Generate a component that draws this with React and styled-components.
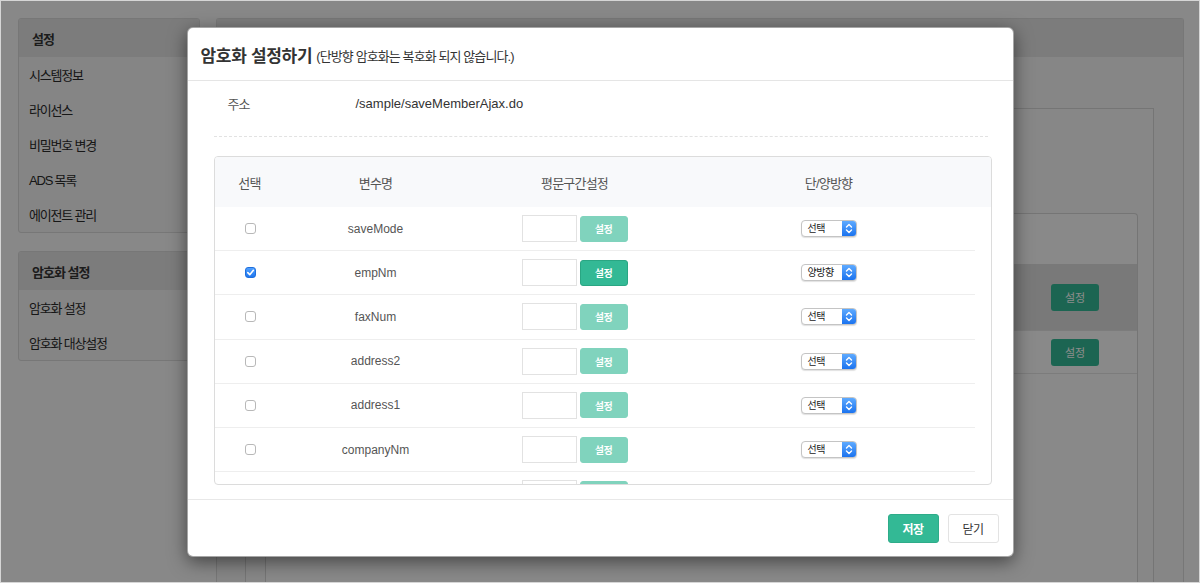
import styled, { createGlobalStyle } from 'styled-components';

const GlobalStyle = createGlobalStyle`
  html, body {
    margin: 0;
    padding: 0;
  }
  body {
    font-family: "Liberation Sans", "Noto Sans CJK KR", sans-serif;
    color: #333;
  }
  * {
    box-sizing: border-box;
  }
`;

const menuGroups = [
  { title: '설정', items: ['시스템정보', '라이선스', '비밀번호 변경', 'ADS 목록', '에이전트 관리'] },
  { title: '암호화 설정', items: ['암호화 설정', '암호화 대상설정'] },
];

const fields = [
  { name: 'saveMode', checked: false, direction: '선택' },
  { name: 'empNm', checked: true, direction: '양방향' },
  { name: 'faxNum', checked: false, direction: '선택' },
  { name: 'address2', checked: false, direction: '선택' },
  { name: 'address1', checked: false, direction: '선택' },
  { name: 'companyNm', checked: false, direction: '선택' },
  // last row is scrolled past the bottom edge, only the input tops show
  { name: '', checked: false, direction: null },
];

function CheckBox({ checked }) {
  return (
    <Check $checked={checked}>
      {checked && (
        <svg width="9" height="9" viewBox="0 0 10 10">
          <path d="M2 5.2 L4.2 7.4 L8.2 2.6" fill="none" stroke="#fff" strokeWidth="1.8" strokeLinecap="round" strokeLinejoin="round" />
        </svg>
      )}
    </Check>
  );
}

function MacSelect({ value }) {
  return (
    <SelectBox>
      <SelectValue>{value}</SelectValue>
      <SelectArrows>
        <svg width="8" height="11" viewBox="0 0 8 11">
          <path d="M1.5 4 L4 1.6 L6.5 4 M1.5 7 L4 9.4 L6.5 7" fill="none" stroke="#fff" strokeWidth="1.4" strokeLinecap="round" strokeLinejoin="round" />
        </svg>
      </SelectArrows>
    </SelectBox>
  );
}

function App() {
  return (
    <>
      <GlobalStyle />
      <Frame>
        <Sidebar>
          {menuGroups.map((group) => (
            <Panel key={group.title}>
              <PanelHeader>{group.title}</PanelHeader>
              {group.items.map((item) => (
                <MenuItem key={item}>{item}</MenuItem>
              ))}
            </Panel>
          ))}
        </Sidebar>

        <Main>
          <MainHeader />
          <MainBody>
            <OuterBox>
              <InnerBox>
                <InnerHead />
                <InnerRow $highlight $height={67}>
                  <BgButton>설정</BgButton>
                </InnerRow>
                <InnerRow $height={43}>
                  <BgButton>설정</BgButton>
                </InnerRow>
              </InnerBox>
            </OuterBox>
          </MainBody>
        </Main>

        <Overlay>
          <Modal>
            <ModalHeader>
              <Title>암호화 설정하기</Title>
              <SubTitle>(단방향 암호화는 복호화 되지 않습니다.)</SubTitle>
            </ModalHeader>

            <ModalBody>
              <AddressRow>
                <AddressLabel>주소</AddressLabel>
                <AddressValue>/sample/saveMemberAjax.do</AddressValue>
              </AddressRow>
              <Dashed />

              <TableBox>
                <HeadRow>
                  <HeadCell>선택</HeadCell>
                  <HeadCell>변수명</HeadCell>
                  <HeadCell>평문구간설정</HeadCell>
                  <HeadCell>단/양방향</HeadCell>
                  <span />
                </HeadRow>
                <Scroll>
                  {fields.map((f, i) => (
                    <Row key={i}>
                      <Cell>{f.direction && <CheckBox checked={f.checked} />}</Cell>
                      <NameCell>{f.name}</NameCell>
                      <Cell>
                        <PlainInput />
                        <SetButton $active={f.checked}>{f.direction && '설정'}</SetButton>
                      </Cell>
                      <Cell>{f.direction && <MacSelect value={f.direction} />}</Cell>
                    </Row>
                  ))}
                </Scroll>
              </TableBox>
            </ModalBody>

            <ModalFooter>
              <FooterButton $primary>저장</FooterButton>
              <FooterButton>닫기</FooterButton>
            </ModalFooter>
          </Modal>
        </Overlay>
      </Frame>
    </>
  );
}

const Frame = styled.div`
  position: relative;
  width: 1200px;
  height: 583px;
  overflow: hidden;
  border: 1px solid #d6d6d6;
  background: #f7f7f7;
  display: flex;
  gap: 16px;
  padding: 17px 15px 0 17px;
`;

const Sidebar = styled.aside`
  width: 182px;
  flex-shrink: 0;
  display: flex;
  flex-direction: column;
  gap: 18px;
`;

const Panel = styled.div`
  background: #f2f2f2;
  border: 1px solid #d9d9d9;
  border-radius: 3px;
  overflow: hidden;
`;

const PanelHeader = styled.div`
  height: 38px;
  display: flex;
  align-items: center;
  padding-left: 13px;
  background: #e2e2e2;
  font-size: 13px;
  font-weight: bold;
  letter-spacing: -1px;
`;

const MenuItem = styled.div`
  height: 35px;
  display: flex;
  align-items: center;
  padding-left: 10px;
  font-size: 13px;
  letter-spacing: -1.2px;
  color: #2a2a2a;
`;

const Main = styled.section`
  flex: 1;
  background: #f4f4f4;
  border: 1px solid #d9d9d9;
  border-bottom: none;
  border-radius: 3px 3px 0 0;
  display: flex;
  flex-direction: column;
`;

const MainHeader = styled.div`
  height: 38px;
  background: #e2e2e2;
`;

const MainBody = styled.div`
  flex: 1;
  display: flex;
  padding: 51px 29px 0 28px;
`;

const OuterBox = styled.div`
  flex: 1;
  border: 1px solid #d6d6d6;
  border-bottom: none;
  background: #f6f6f6;
  padding: 104px 15px 0 19px;
  display: flex;
`;

const InnerBox = styled.div`
  flex: 1;
  border: 1px solid #d6d6d6;
  border-bottom: none;
  border-radius: 4px 4px 0 0;
  background: #f9f9f9;
`;

const InnerHead = styled.div`
  height: 50px;
`;

const InnerRow = styled.div`
  height: ${(p) => p.$height}px;
  background: ${(p) => (p.$highlight ? '#dcdcdc' : 'transparent')};
  border-bottom: 1px solid #e2e2e2;
  display: flex;
  align-items: center;
  justify-content: flex-end;
  padding-right: 38px;
`;

const BgButton = styled.div`
  width: 48px;
  height: 27px;
  border-radius: 3px;
  background: #33b995;
  color: #fff;
  font-size: 11px;
  display: flex;
  align-items: center;
  justify-content: center;
`;

const Overlay = styled.div`
  position: absolute;
  inset: 0;
  background: rgba(0, 0, 0, 0.45);
  display: flex;
  justify-content: center;
  align-items: flex-start;
  padding-top: 26px;
`;

const Modal = styled.div`
  width: 827px;
  background: #fff;
  border: 1px solid rgba(0, 0, 0, 0.35);
  border-radius: 6px;
  box-shadow: 0 5px 18px rgba(0, 0, 0, 0.5);
  display: flex;
  flex-direction: column;
`;

const ModalHeader = styled.div`
  height: 53px;
  border-bottom: 1px solid #e5e5e5;
  display: flex;
  align-items: center;
  gap: 4px;
  padding: 0 13px;
`;

const Title = styled.h4`
  margin: 0;
  font-size: 17px;
  font-weight: bold;
  letter-spacing: -0.3px;
  color: #333;
`;

const SubTitle = styled.span`
  font-size: 13px;
  letter-spacing: -0.9px;
  color: #333;
  padding-top: 2px;
`;

const ModalBody = styled.div`
  padding: 12px 21px 14px 26px;
`;

const AddressRow = styled.div`
  display: flex;
  align-items: center;
  height: 20px;
  padding-left: 14px;
`;

const AddressLabel = styled.span`
  width: 128px;
  font-size: 13px;
  letter-spacing: -1px;
  color: #555;
`;

const AddressValue = styled.span`
  font-size: 13px;
  color: #333;
`;

const Dashed = styled.div`
  margin: 23px 4px 19px 0;
  border-top: 1px dashed #e2e2e2;
`;

const TableBox = styled.div`
  border: 1px solid #dcdcdc;
  border-radius: 4px;
  overflow: hidden;
`;

const columns = '70px 182px 216px 292px';

const HeadRow = styled.div`
  display: grid;
  grid-template-columns: ${columns} 1fr;
  height: 50px;
  background: #f8f9fb;
  align-items: center;
`;

const HeadCell = styled.div`
  text-align: center;
  font-size: 13px;
  letter-spacing: -0.8px;
  color: #555;
`;

const Scroll = styled.div`
  height: 277px;
  overflow: hidden;
`;

const Row = styled.div`
  display: grid;
  grid-template-columns: ${columns};
  width: 760px;
  height: 44.2px;
  border-bottom: 1px solid #eeeeee;
  align-items: center;
`;

const Cell = styled.div`
  display: flex;
  justify-content: center;
  align-items: center;
  gap: 3px;
`;

const NameCell = styled.div`
  text-align: center;
  font-size: 12px;
  color: #555;
`;

const Check = styled.span`
  width: 11px;
  height: 11px;
  border-radius: 3px;
  display: flex;
  align-items: center;
  justify-content: center;
  background: ${(p) => (p.$checked ? 'linear-gradient(#4fa0ff, #1f77f0)' : '#fff')};
  border: 1px solid ${(p) => (p.$checked ? '#1f6fdc' : '#b8b8b8')};
  margin-left: 2px;
`;

const PlainInput = styled.div`
  width: 55px;
  height: 27px;
  border: 1px solid #e2e2e2;
  background: #fff;
`;

const SetButton = styled.div`
  width: 48px;
  height: 26px;
  border-radius: 3px;
  background: #33b995;
  border: 1px solid ${(p) => (p.$active ? '#2aa683' : '#33b995')};
  opacity: ${(p) => (p.$active ? 1 : 0.62)};
  color: #fff;
  font-size: 10px;
  font-weight: bold;
  letter-spacing: -0.5px;
  display: flex;
  align-items: center;
  justify-content: center;
`;

const SelectBox = styled.div`
  width: 56px;
  height: 17px;
  display: flex;
  border-radius: 4px;
  border: 1px solid #c4c4c4;
  box-shadow: 0 1px 1px rgba(0, 0, 0, 0.12);
  background: #fff;
  overflow: hidden;
`;

const SelectValue = styled.span`
  flex: 1;
  font-size: 10px;
  letter-spacing: -0.5px;
  color: #222;
  padding-left: 6px;
  line-height: 15px;
`;

const SelectArrows = styled.span`
  width: 14px;
  display: flex;
  align-items: center;
  justify-content: center;
  background: linear-gradient(#5eaaff, #1b73ef);
`;

const ModalFooter = styled.div`
  border-top: 1px solid #e8e8e8;
  display: flex;
  justify-content: flex-end;
  gap: 9px;
  padding: 14px 14px 13px;
`;

const FooterButton = styled.div`
  width: 51px;
  height: 29px;
  border-radius: 3px;
  display: flex;
  align-items: center;
  justify-content: center;
  font-size: 12px;
  letter-spacing: -0.5px;
  font-weight: ${(p) => (p.$primary ? 'bold' : 'normal')};
  color: ${(p) => (p.$primary ? '#fff' : '#333')};
  background: ${(p) => (p.$primary ? '#33b995' : '#fff')};
  border: 1px solid ${(p) => (p.$primary ? '#2eac89' : '#e3e3e3')};
`;

export default App;
